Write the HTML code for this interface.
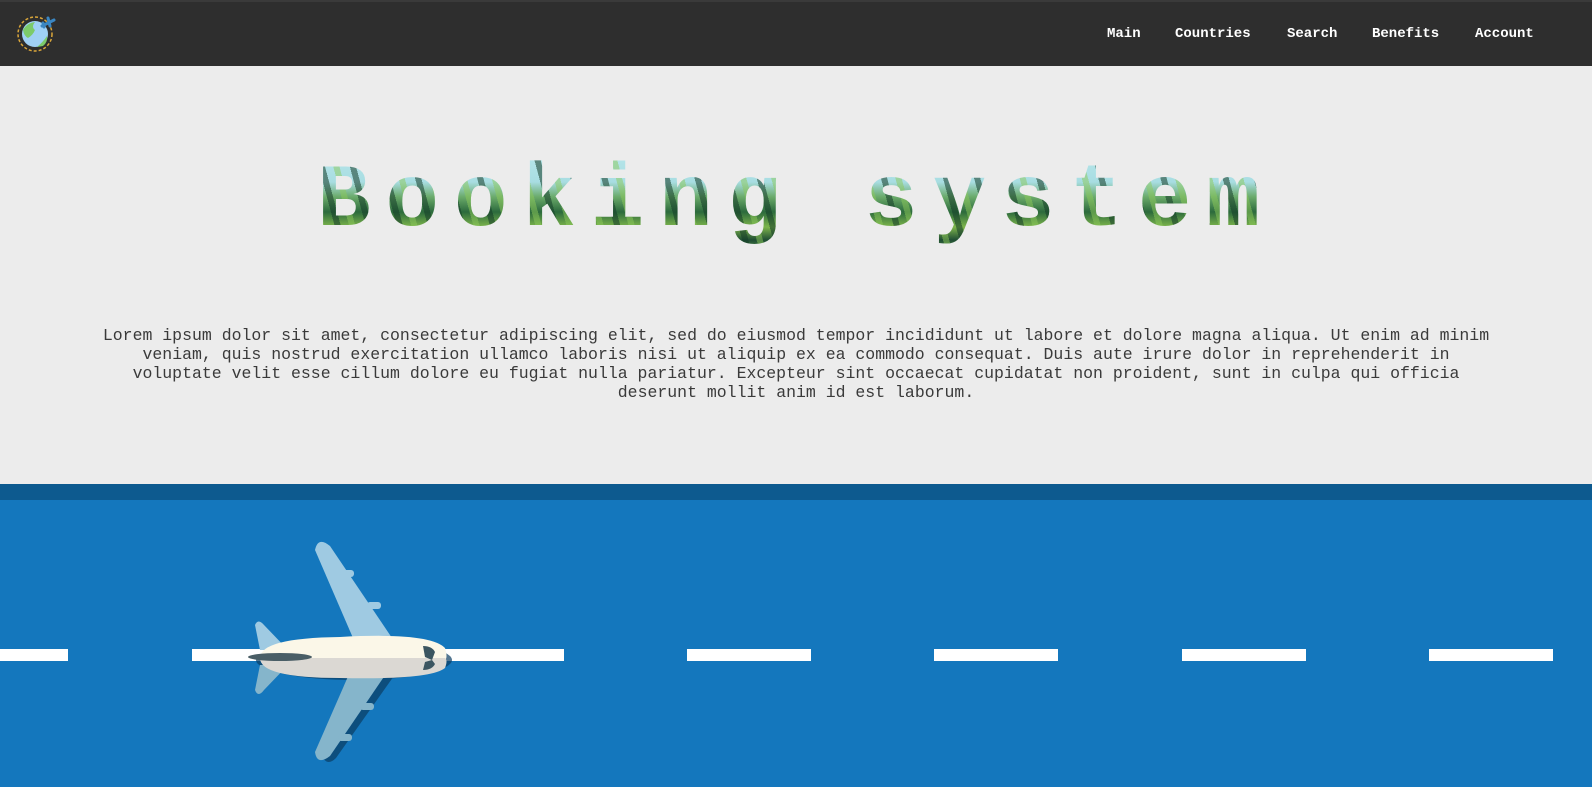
<!DOCTYPE html>
<html><head><meta charset="utf-8"><style>
*{margin:0;padding:0;box-sizing:border-box}
body{width:1592px;height:787px;overflow:hidden;background:#ececec;font-family:"Liberation Mono",monospace;position:relative}
.nav{position:absolute;left:0;top:0;width:1592px;height:66px;background:#2e2e2e;border-top:2px solid #3a3a3a}
.nav a{position:absolute;top:24px;color:#fff;font-weight:bold;font-size:14px;text-decoration:none;font-family:"Liberation Mono",monospace}
h1{position:absolute;left:0;width:1592px;top:152px;text-align:center;font-size:89px;font-weight:bold;letter-spacing:15px;padding-left:0;line-height:100px;
background:
repeating-linear-gradient(75deg,rgba(20,60,40,.55) 0 6px,rgba(0,0,0,0) 6px 14px,rgba(140,200,90,.5) 14px 20px,rgba(0,0,0,0) 20px 30px),
linear-gradient(180deg,#b8e6ea 0%,#a8dde2 30%,#6aaa6a 45%,#2c6a3c 60%,#7db54c 75%,#1f4d33 88%,#5a9a4a 100%);
-webkit-background-clip:text;background-clip:text;color:transparent}
p{position:absolute;left:96px;width:1400px;top:326px;text-align:center;font-size:16.5px;line-height:19px;color:#3a3a3a}
.dark{position:absolute;left:0;top:484px;width:1592px;height:16px;background:#0d5a8f}
.blue{position:absolute;left:0;top:500px;width:1592px;height:287px;background:#1477bd}
.d{position:absolute;top:649px;height:12px;width:124px;background:#fff}
</style></head><body>
<div class="nav">
<svg style="position:absolute;left:15px;top:12px" width="42" height="40" viewBox="0 0 42 40">
<circle cx="20" cy="20" r="17" fill="none" stroke="#d9a53a" stroke-width="1.5" stroke-dasharray="3 2"/>
<circle cx="20" cy="20" r="13" fill="#9fd0f5"/>
<path d="M8 16 Q12 9 20 8 Q16 13 20 16 Q18 21 13 24 Q9 22 8 16Z" fill="#7ccb6a"/>
<path d="M22 33 Q28 28 32 22 Q33 28 28 32Z" fill="#7ccb6a"/>
<path d="M27 12 L39 6 M33 4 L35 12 M28 9 L29 13" stroke="#3a86c2" stroke-width="3" stroke-linecap="round"/>
</svg>
<a style="left:1107px">Main</a>
<a style="left:1175px">Countries</a>
<a style="left:1287px">Search</a>
<a style="left:1372px">Benefits</a>
<a style="left:1475px">Account</a>
</div>
<h1>Booking system</h1>
<p>Lorem ipsum dolor sit amet, consectetur adipiscing elit, sed do eiusmod tempor incididunt ut labore et dolore magna aliqua. Ut enim ad minim veniam, quis nostrud exercitation ullamco laboris nisi ut aliquip ex ea commodo consequat. Duis aute irure dolor in reprehenderit in voluptate velit esse cillum dolore eu fugiat nulla pariatur. Excepteur sint occaecat cupidatat non proident, sunt in culpa qui officia deserunt mollit anim id est laborum.</p>
<div class="dark"></div><div class="blue"></div>
<div class="d" style="left:-56px"></div>
<div class="d" style="left:192px"></div>
<div class="d" style="left:440px"></div>
<div class="d" style="left:687px"></div>
<div class="d" style="left:934px"></div>
<div class="d" style="left:1182px"></div>
<div class="d" style="left:1429px"></div>
<svg style="position:absolute;left:220px;top:520px" width="260" height="267" viewBox="0 0 260 267">
<g fill="#0b3d63" opacity="0.7" transform="translate(6,8)">
<path d="M95 30 Q100 18 110 28 L170 118 L135 118 Z"/>
<path d="M95 225 Q100 240 110 230 L170 145 L135 145 Z"/>
<ellipse cx="128" cy="132" rx="98" ry="20"/>
</g>
<path d="M95 30 Q98 16 110 26 L172 118 L133 118 Z" fill="#9fcae2"/>
<rect x="120" y="50" width="14" height="7" rx="3" fill="#9fcae2"/>
<rect x="147" y="82" width="14" height="7" rx="3" fill="#9fcae2"/>
<path d="M95 232 Q97 246 110 236 L172 145 L133 145 Z" fill="#85b5cb"/>
<rect x="140" y="183" width="14" height="7" rx="3" fill="#85b5cb"/>
<rect x="118" y="214" width="14" height="7" rx="3" fill="#85b5cb"/>
<path d="M35 105 Q38 98 44 105 L68 130 L40 130Z" fill="#9fcae2"/>
<path d="M35 170 Q38 178 44 170 L68 145 L40 145Z" fill="#85b5cb"/>
<path d="M40 138 Q40 118 120 117 Q210 112 225 128 Q228 138 225 140 Z" fill="#fbf7e8"/>
<path d="M40 138 Q40 158 120 158 Q210 160 225 148 Q228 140 225 138 Z" fill="#dbd8d3"/>
<ellipse cx="60" cy="137" rx="32" ry="4" fill="#4a5e66"/>
<path d="M203 126 Q212 126 215 132 L212 140 L205 137Z" fill="#3b5560"/>
<path d="M203 150 Q212 150 215 144 L212 140 L205 142Z" fill="#3b5560"/>
</svg>
</body></html>
